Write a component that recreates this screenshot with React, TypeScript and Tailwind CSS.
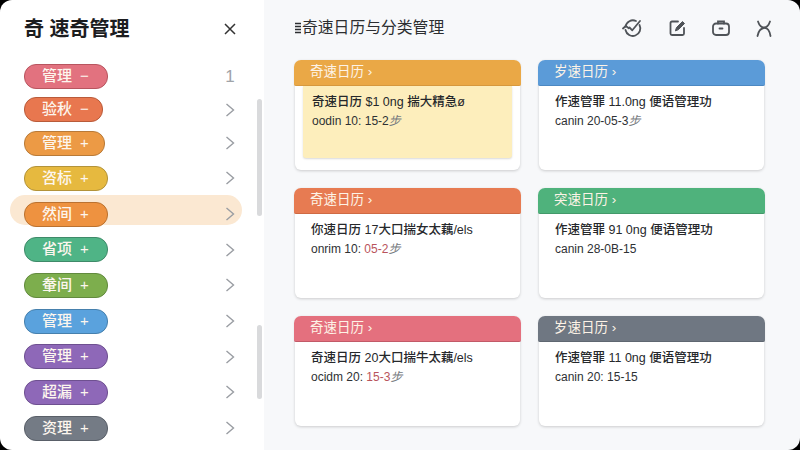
import React from 'react';

type Category = {
  id: number;
  label: string;
  sign: string;
  pill: string;
  rowHeight: string;
  active?: boolean;
  first?: boolean;
};

type Note = {
  id: number;
  title: string;
  header: string;
  line: string;
  meta: string;
  accent?: string;
  tail?: string;
  highlighted?: boolean;
};

const categories: Category[] = [
  { id: 1, label: '管理', sign: '−', pill: 'w-[84px] bg-[#e2727f] border-[#b8555f]', rowHeight: 'h-[33px]', first: true },
  { id: 2, label: '验秋', sign: '−', pill: 'w-[79px] bg-[#e8774f] border-[#b95b3a]', rowHeight: 'h-[33px]' },
  { id: 3, label: '管理', sign: '+', pill: 'w-[81px] bg-[#ec9a45] border-[#b87a38]', rowHeight: 'h-[34px]' },
  { id: 4, label: '咨标', sign: '+', pill: 'w-[84px] bg-[#e6b93f] border-[#b3933a]', rowHeight: 'h-[36px]' },
  { id: 5, label: '然间', sign: '+', pill: 'w-[84px] bg-[#ee9240] border-[#bb7230]', rowHeight: 'h-[36px]', active: true },
  { id: 6, label: '省项', sign: '+', pill: 'w-[84px] bg-[#4fb486] border-[#3f8a69]', rowHeight: 'h-[35px]' },
  { id: 7, label: '軬间', sign: '+', pill: 'w-[84px] bg-[#7dae4d] border-[#628a3e]', rowHeight: 'h-[36px]' },
  { id: 8, label: '管理', sign: '+', pill: 'w-[84px] bg-[#5aa2dd] border-[#4680ad]', rowHeight: 'h-[36px]' },
  { id: 9, label: '管理', sign: '+', pill: 'w-[84px] bg-[#8e68b8] border-[#6e5090]', rowHeight: 'h-[35px]' },
  { id: 10, label: '超漏', sign: '+', pill: 'w-[84px] bg-[#8e68b8] border-[#6e5090]', rowHeight: 'h-[36px]' },
  { id: 11, label: '资理', sign: '+', pill: 'w-[84px] bg-[#747b85] border-[#595f68]', rowHeight: 'h-[36px]' },
];

const notes: Note[] = [
  { id: 1, title: '奇速日历 ›', header: 'bg-[#eaa846] border-[#d89a3f]', line: '奇速日历 $1 0ng 揣大精急ø', meta: 'oodin 10: 15-2', tail: '步', highlighted: true },
  { id: 2, title: '岁速日历 ›', header: 'bg-[#5b9bd8] border-[#4c88c2]', line: '作速管罪 11.0ng 便语管理功', meta: 'canin 20-05-3', tail: '步' },
  { id: 3, title: '奇速日历 ›', header: 'bg-[#e77b52] border-[#cf6a44]', line: '你速日历 17大口揣女太藕/els', meta: 'onrim 10: ', accent: '05-2', tail: '步' },
  { id: 4, title: '突速日历 ›', header: 'bg-[#4fb27c] border-[#43996a]', line: '作速管罪 91 0ng 便语管理功', meta: 'canin 28-0B-15' },
  { id: 5, title: '奇速日历 ›', header: 'bg-[#e4707e] border-[#c25a68]', line: '奇速日历 20大口揣牛太藕/els', meta: 'ocidm 20: ', accent: '15-3', tail: '步' },
  { id: 6, title: '岁速日历 ›', header: 'bg-[#6f7782] border-[#5f6771]', line: '作速管罪 11 0ng 便语管理功', meta: 'canin 20: 15-15' },
];

function Chevron() {
  return (
    <svg width="12" height="16" viewBox="0 0 12 16" fill="none" stroke="#9a9da3" strokeWidth="1.4" aria-hidden="true">
      <path d="M2.5 2l7 6-7 6" />
    </svg>
  );
}

function ToolbarIcons() {
  return (
    <div className="-mr-[8px] flex items-center gap-[26px] text-[#4f5358]">
      <svg width="21" height="20" viewBox="0 0 21 20" fill="none" stroke="currentColor" strokeWidth="1.8" strokeLinecap="round" strokeLinejoin="round" aria-hidden="true">
        <path d="M3.500 8.500A7.500 7.500 0 0 1 14 3" />
        <path d="M17.500 7a7.500 7.500 0 1 1-14 5" />
        <path d="M1 10.500l2.800-2.500 3 2.300" />
        <path d="M7.500 9.500l2.800 2.800L18 3" />
      </svg>
      <svg width="17" height="18" viewBox="0 0 17 18" fill="none" stroke="currentColor" strokeWidth="1.8" strokeLinecap="round" strokeLinejoin="round" aria-hidden="true">
        <path d="M9 2.500H3a1.500 1.500 0 0 0-1.500 1.500v10.500A1.500 1.500 0 0 0 3 16h10.500a1.500 1.500 0 0 0 1.500-1.500V9" />
        <path d="M6.500 11.500l1-3 6-6 2 2-6 6z" fill="currentColor" strokeWidth="1" />
      </svg>
      <svg width="18" height="16" viewBox="0 0 18 16" fill="none" stroke="currentColor" strokeWidth="1.8" strokeLinecap="round" aria-hidden="true">
        <rect x="1" y="3.500" width="16" height="11.500" rx="3" />
        <path d="M6 3.500V1.500h6v2M7.500 8.500h3" />
      </svg>
      <svg width="16" height="17" viewBox="0 0 16 17" fill="none" stroke="currentColor" strokeWidth="1.8" strokeLinecap="round" aria-hidden="true">
        <path d="M2 1.500Q4 7.500 8 7.500T14 1.500" />
        <path d="M1.500 16Q3 8.500 8 8T14.500 16" />
      </svg>
    </div>
  );
}

function NoteCard({ note }: { note: Note }) {
  return (
    <div className="h-[110px] rounded-[6px] bg-white shadow-[0_1px_3px_rgba(0,0,0,0.18)]">
      <div className={`-mx-px flex h-[26px] items-center rounded-t-[7px] rounded-b-[2px] border-b px-[16px] text-[13.500px] text-[#fdf3e6] ${note.header}`}>
        {note.title}
      </div>
      <div className={note.highlighted ? 'mx-[8px] mb-[8px] h-[72px] rounded-b-[3px] bg-[#fdeebc] px-[9px] pt-[6px] shadow-[0_1px_2px_rgba(0,0,0,0.15)]' : 'px-[16px] pt-[6px]'}>
        <div className="whitespace-nowrap text-[12.500px] leading-[21px] font-medium text-[#26282b]">{note.line}</div>
        <div className="whitespace-nowrap text-[12px] leading-[16px] text-[#2e3134]">
          {note.meta}
          {note.accent && <span className="text-[#b9545c]">{note.accent}</span>}
          {note.tail && <span className="text-[#777b80] italic">{note.tail}</span>}
        </div>
      </div>
    </div>
  );
}

export default function App() {
  return (
    <div className="h-[450px] w-[800px] overflow-hidden bg-black font-['Liberation_Sans','Noto_Sans_CJK_SC',sans-serif]">
      <div className="relative flex h-full w-full overflow-hidden rounded-[12px]">
        <aside className="relative flex h-full w-[264px] shrink-0 flex-col bg-white">
          <div className="flex h-[60px] shrink-0 items-center justify-between pr-[27px] pb-[3px] pl-[24px]">
            <h1 className="text-[20px] font-bold text-[#1c1d1f]">奇 速奇管理</h1>
            <svg width="14" height="14" viewBox="0 0 14 14" stroke="#333" strokeWidth="1.5" aria-hidden="true">
              <path d="M2 2l10 10M12 2L2 12" />
            </svg>
          </div>
          <ul className="flex flex-col">
            {categories.map((cat) => (
              <li key={cat.id} className={`relative flex shrink-0 items-center justify-between pr-[28px] pl-[24px] ${cat.rowHeight}`}>
                {cat.active && <div className="absolute top-[-1px] left-[10px] h-[30px] w-[232px] rounded-[15px] bg-[#fbe8d2]" />}
                <span className={`relative flex h-[25px] items-center gap-[8px] rounded-[12px] border pl-[17px] text-[15px] font-medium text-[#fdf6ee] ${cat.pill}`}>
                  {cat.label}
                  <span>{cat.sign}</span>
                </span>
                <span className="relative flex w-[12px] justify-center">
                  {cat.first ? <span className="text-[17px] text-[#a0a3a8]">1</span> : <Chevron />}
                </span>
              </li>
            ))}
          </ul>
          <div className="absolute top-[99px] right-[2px] h-[117px] w-[5px] rounded bg-[#d9dadc]" />
          <div className="absolute top-[325px] right-[2px] h-[74px] w-[5px] rounded bg-[#d9dadc]" />
        </aside>
        <main className="flex-1 bg-[#f7f8fa] pt-[14px] pr-[36px] pl-[31px]">
          <div className="flex h-[28px] items-center justify-between">
            <h2 className="flex items-center text-[15.800px] text-[#2c2e31]">
              <svg width="7" height="12" viewBox="0 0 7 12" stroke="#2c2e31" strokeWidth="1.500" aria-hidden="true">
                <path d="M0 1.500h6M0 4.500h6M0 7.500h6M0 10.500h6" />
              </svg>
              奇速日历与分类管理
            </h2>
            <ToolbarIcons />
          </div>
          <div className="mt-[18px] grid grid-cols-2 gap-x-[19px] gap-y-[18px]">
            {notes.map((note) => (
              <NoteCard key={note.id} note={note} />
            ))}
          </div>
        </main>
      </div>
    </div>
  );
}
